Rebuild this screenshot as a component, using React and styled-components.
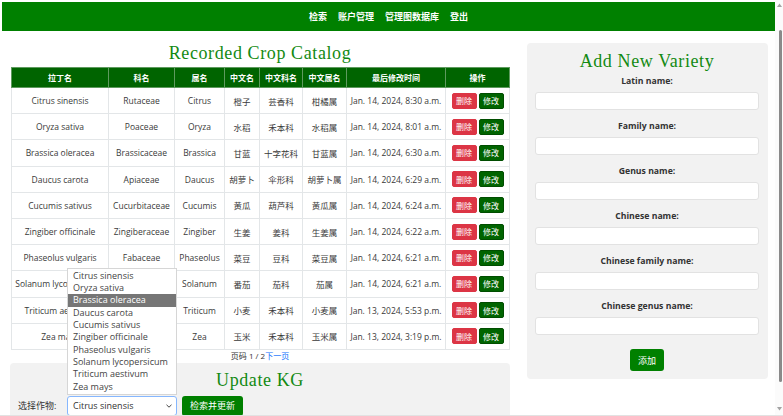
import React from "react";
import styled, { createGlobalStyle } from "styled-components";

const GlobalStyle = createGlobalStyle`
  html, body {
    margin: 0;
    padding: 0;
    background: #fff;
    overflow: hidden;
  }
  body {
    font-family: "Open Sans", "Noto Sans CJK SC", sans-serif;
    color: #212529;
  }
`;

const Frame = styled.div`
  width: 783px;
  height: 416px;
  display: flex;
  overflow: hidden;
  box-sizing: border-box;
  border-bottom: 1px solid #e2e2e2;
`;

const Page = styled.div`
  flex: 1;
  padding: 2px 0 0 2px;
  min-width: 0;
  overflow: hidden;
`;

const Scrollbar = styled.div`
  width: 8px;
  display: flex;
  flex-direction: column;
  align-items: center;
  background: #fbfbfb;
  padding-top: 3px;
`;

const Thumb = styled.div`
  width: 3px;
  height: 352px;
  margin-top: 23px;
  margin-left: 2px;
  background: #8a8a8a;
  border-radius: 2px;
`;

const ArrowGap = styled.div`
  flex: 1;
`;

const Nav = styled.nav`
  height: 29px;
  background: #008000;
  display: flex;
  justify-content: center;
  align-items: center;
  gap: 11px;
`;

const NavLink = styled.a`
  color: #fff;
  font-size: 9px;
  font-weight: 700;
  text-decoration: none;
`;

const Main = styled.div`
  display: flex;
  align-items: flex-start;
  gap: 17px;
  padding: 12px 0 0 8px;
`;

const LeftCol = styled.div`
  width: 500px;
  flex-shrink: 0;
`;

const Title = styled.h2`
  margin: ${(p) => p.$m || "0"};
  font-family: "Liberation Serif", "DejaVu Serif", serif;
  font-weight: 400;
  font-size: 18px;
  letter-spacing: 0.6px;
  line-height: 20px;
  color: #138a13;
  text-align: center;
`;

const Table = styled.table`
  margin-left: 1px;
  width: 498px;
  border-collapse: collapse;
  table-layout: fixed;
  font-size: 8.5px;
`;

const Th = styled.th`
  box-sizing: border-box;
  width: ${(p) => p.$w}px;
  height: 20px;
  padding: 0;
  background: #006400;
  color: #fff;
  font-size: 8px;
  font-weight: 700;
  border: 1px solid #5e9a5e;
`;

const Td = styled.td`
  box-sizing: border-box;
  height: 26.2px;
  padding: 0 3px;
  border: 1px solid #e3e6e8;
  text-align: center;
  color: #3a3a3a;
  white-space: nowrap;
  overflow: visible;
`;

const Actions = styled.div`
  display: flex;
  justify-content: center;
  gap: 2px;
`;

const ActionBtn = styled.button`
  width: 25px;
  height: 16px;
  padding: 0;
  border-radius: 2px;
  border: 1px solid ${(p) => (p.$danger ? "#dc3545" : "#004d00")};
  background: ${(p) => (p.$danger ? "#dc3545" : "#006400")};
  color: #fff;
  font-family: inherit;
  font-size: 8px;
`;

const Pager = styled.div`
  text-align: center;
  font-size: 8px;
  line-height: 12px;
  color: #333;
  margin: 0 0 1px;
`;

const PagerLink = styled.a`
  color: #0d6efd;
  text-decoration: none;
`;

const GrayBox = styled.div`
  background: #f2f2f2;
  border-radius: 4px;
  padding: ${(p) => p.$pad};
`;

const SelectRow = styled.div`
  display: flex;
  align-items: center;
  gap: 5px;
  margin-top: 6px;
  font-size: 9px;
  color: #333;
`;

const RowLabel = styled.span`
  width: 44px;
  white-space: nowrap;
`;

const SelectWrap = styled.div`
  position: relative;
`;

const FakeSelect = styled.div`
  width: 110px;
  height: 20px;
  box-sizing: border-box;
  border: 1px solid #86b7fe;
  border-radius: 3px;
  background: #fff;
  display: flex;
  align-items: center;
  justify-content: space-between;
  padding: 0 4px 0 5px;
  font-size: 9px;
  color: #333;
`;

const OptionList = styled.ul`
  position: absolute;
  left: 0;
  bottom: calc(100% + 1px);
  width: 110px;
  box-sizing: border-box;
  margin: 0;
  padding: 1px 0;
  list-style: none;
  background: #fff;
  border: 1px solid #d6d6d6;
`;

const Option = styled.li`
  height: 12.33px;
  line-height: 12.33px;
  padding-left: 5px;
  font-size: 9px;
  white-space: nowrap;
  color: ${(p) => (p.$active ? "#fff" : "#444")};
  background: ${(p) => (p.$active ? "#767676" : "transparent")};
`;

const GreenBtn = styled.button`
  height: ${(p) => p.$h}px;
  margin-top: ${(p) => p.$mt || 0}px;
  padding: 0 8px;
  border: none;
  border-radius: 3px;
  background: #008000;
  color: #fff;
  font-family: inherit;
  font-size: 9px;
`;

const SidePanel = styled.div`
  width: 241px;
  flex-shrink: 0;
  box-sizing: border-box;
  background: #f2f2f2;
  border-radius: 4px;
  padding: 8px 9px 8px 8px;
  display: flex;
  flex-direction: column;
  align-items: center;
`;

const Field = styled.div`
  width: 100%;
  margin-bottom: 10px;
  text-align: center;
`;

const Label = styled.label`
  display: block;
  font-size: 8.7px;
  font-weight: 700;
  line-height: 12px;
  color: #333;
  margin-bottom: 5px;
`;

const Input = styled.div`
  height: 18px;
  box-sizing: border-box;
  background: #fff;
  border: 1px solid #e2e2e2;
  border-radius: 3px;
`;

const rows = [
  ["Citrus sinensis", "Rutaceae", "Citrus", "橙子", "芸香科", "柑橘属", "Jan. 14, 2024, 8:30 a.m."],
  ["Oryza sativa", "Poaceae", "Oryza", "水稻", "禾本科", "水稻属", "Jan. 14, 2024, 8:01 a.m."],
  ["Brassica oleracea", "Brassicaceae", "Brassica", "甘蓝", "十字花科", "甘蓝属", "Jan. 14, 2024, 6:30 a.m."],
  ["Daucus carota", "Apiaceae", "Daucus", "胡萝卜", "伞形科", "胡萝卜属", "Jan. 14, 2024, 6:29 a.m."],
  ["Cucumis sativus", "Cucurbitaceae", "Cucumis", "黄瓜", "葫芦科", "黄瓜属", "Jan. 14, 2024, 6:24 a.m."],
  ["Zingiber officinale", "Zingiberaceae", "Zingiber", "生姜", "姜科", "生姜属", "Jan. 14, 2024, 6:22 a.m."],
  ["Phaseolus vulgaris", "Fabaceae", "Phaseolus", "菜豆", "豆科", "菜豆属", "Jan. 14, 2024, 6:21 a.m."],
  ["Solanum lycopersicum", "Solanaceae", "Solanum", "番茄", "茄科", "茄属", "Jan. 14, 2024, 6:21 a.m."],
  ["Triticum aestivum", "Poaceae", "Triticum", "小麦", "禾本科", "小麦属", "Jan. 13, 2024, 5:53 p.m."],
  ["Zea mays", "Poaceae", "Zea", "玉米", "禾本科", "玉米属", "Jan. 13, 2024, 3:19 p.m."],
];

const headers = [
  ["拉丁名", 97],
  ["科名", 66],
  ["属名", 50],
  ["中文名", 35],
  ["中文科名", 43],
  ["中文属名", 44],
  ["最后修改时间", 99],
  ["操作", 64],
];

const fields = [
  "Latin name:",
  "Family name:",
  "Genus name:",
  "Chinese name:",
  "Chinese family name:",
  "Chinese genus name:",
];

const Chevron = () => (
  <svg width="6" height="4" viewBox="0 0 6 4">
    <path d="M0.5 0.8 L3 3.2 L5.5 0.8" fill="none" stroke="#444" strokeWidth="1" />
  </svg>
);

const Tri = ({ up }) => (
  <svg width="5" height="4" viewBox="0 0 5 4">
    <path d={up ? "M0 4 L2.5 0.5 L5 4 Z" : "M0 0 L2.5 3.5 L5 0 Z"} fill="#a3a3a3" />
  </svg>
);

export default function App() {
  return (
    <>
      <GlobalStyle />
      <Frame>
        <Page>
          <Nav>
            <NavLink>检索</NavLink>
            <NavLink>账户管理</NavLink>
            <NavLink>管理图数据库</NavLink>
            <NavLink>登出</NavLink>
          </Nav>
          <Main>
            <LeftCol>
              <Title $m="0 0 4px">Recorded Crop Catalog</Title>
              <Table>
                <thead>
                  <tr>
                    {headers.map(([h, w]) => (
                      <Th key={h} $w={w}>
                        {h}
                      </Th>
                    ))}
                  </tr>
                </thead>
                <tbody>
                  {rows.map((r) => (
                    <tr key={r[0]}>
                      {r.map((c, i) => (
                        <Td key={i}>{c}</Td>
                      ))}
                      <Td>
                        <Actions>
                          <ActionBtn $danger>删除</ActionBtn>
                          <ActionBtn>修改</ActionBtn>
                        </Actions>
                      </Td>
                    </tr>
                  ))}
                </tbody>
              </Table>
              <Pager>
                页码 1 / 2<PagerLink>下一页</PagerLink>
              </Pager>
              <GrayBox $pad="7px 8px 10px">
                <Title>Update KG</Title>
                <SelectRow>
                  <RowLabel>选择作物:</RowLabel>
                  <SelectWrap>
                    <OptionList>
                      {rows.map((r, i) => (
                        <Option key={r[0]} $active={i === 2}>
                          {r[0]}
                        </Option>
                      ))}
                    </OptionList>
                    <FakeSelect>
                      <span>Citrus sinensis</span>
                      <Chevron />
                    </FakeSelect>
                  </SelectWrap>
                  <GreenBtn $h={20}>检索并更新</GreenBtn>
                </SelectRow>
              </GrayBox>
            </LeftCol>
            <SidePanel>
              <Title $m="0 0 4px">Add New Variety</Title>
              {fields.map((f) => (
                <Field key={f}>
                  <Label>{f}</Label>
                  <Input />
                </Field>
              ))}
              <GreenBtn $h={22} $mt={4}>
                添加
              </GreenBtn>
            </SidePanel>
          </Main>
        </Page>
        <Scrollbar>
          <Tri up />
          <Thumb />
          <ArrowGap />
          <Tri />
          <div style={{ height: 4 }} />
        </Scrollbar>
      </Frame>
    </>
  );
}
